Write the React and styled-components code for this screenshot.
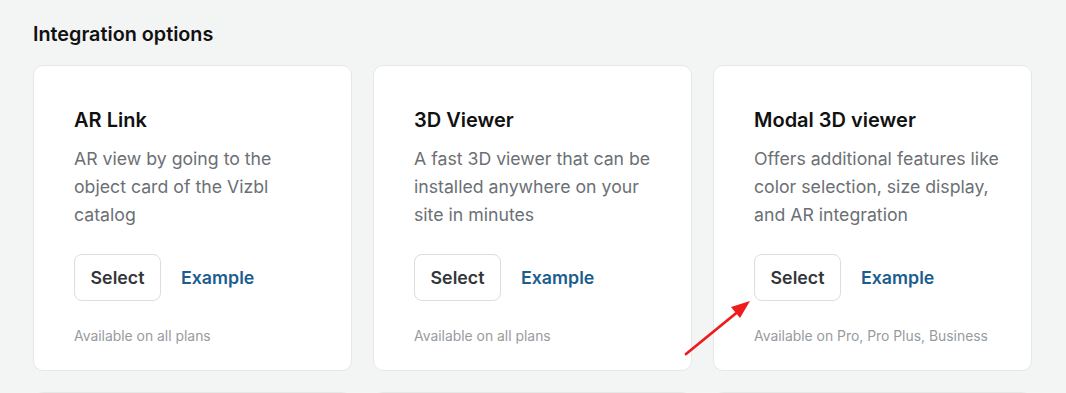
import React from "react";
import styled, { createGlobalStyle } from "styled-components";

const Global = createGlobalStyle`
  html, body { margin: 0; padding: 0; background: #f3f4f4; }
  body { font-family: Inter, "Noto Sans", sans-serif; -webkit-font-smoothing: antialiased; }
  * { box-sizing: border-box; }
`;

const Page = styled.div`
  position: relative;
  padding: 20px 33px 0 33px;
  height: 393px;
  overflow: hidden;
`;

const Heading = styled.h2`
  margin: 0 0 17px 0;
  font-size: 19.8px;
  line-height: 28px;
  font-weight: 600;
  color: #111;
`;

const Grid = styled.div`
  display: grid;
  grid-template-columns: repeat(3, 319px);
  column-gap: 21px;
  row-gap: 21px;
`;

const Card = styled.div`
  background: #fff;
  border: 1px solid #e6e7e7;
  border-radius: 10px;
  padding: 42px 20px 26px 40px;
  height: ${(p) => (p.$short ? "40px" : "306px")};
  display: flex;
  flex-direction: column;
`;

const Title = styled.h3`
  margin: 0 0 13px 0;
  font-size: 20px;
  line-height: 24px;
  font-weight: 600;
  color: #111;
`;

const Desc = styled.p`
  margin: 0;
  font-size: 17.7px;
  line-height: 28px;
  color: #6b7075;
  max-width: 250px;
`;

const Actions = styled.div`
  display: flex;
  align-items: center;
  gap: 20px;
  margin-top: 25px;
`;

const SelectButton = styled.button`
  height: 47px;
  width: 87px;
  border: 1px solid #dcdddf;
  border-radius: 8px;
  background: #fff;
  font-family: inherit;
  font-size: 17.8px;
  font-weight: 600;
  color: #33363a;
  cursor: pointer;
`;

const ExampleLink = styled.a`
  font-size: 17.8px;
  font-weight: 600;
  color: #1b5e8e;
  text-decoration: none;
`;

const Note = styled.div`
  margin-top: 26px;
  font-size: 13.9px;
  line-height: 18px;
  color: #979ba0;
`;

const Arrow = styled.svg`
  position: absolute;
  left: 680px;
  top: 292px;
  pointer-events: none;
`;

const items = [
  {
    title: "AR Link",
    desc: "AR view by going to the object card of the Vizbl catalog",
    note: "Available on all plans",
  },
  {
    title: "3D Viewer",
    desc: "A fast 3D viewer that can be installed anywhere on your site in minutes",
    note: "Available on all plans",
  },
  {
    title: "Modal 3D viewer",
    desc: "Offers additional features like color selection, size display, and AR integration",
    note: "Available on Pro, Pro Plus, Business",
  },
];

export default function App() {
  return (
    <>
      <Global />
      <Page>
        <Heading>Integration options</Heading>
        <Grid>
          {items.map((it) => (
            <Card key={it.title}>
              <Title>{it.title}</Title>
              <Desc>{it.desc}</Desc>
              <Actions>
                <SelectButton>Select</SelectButton>
                <ExampleLink href="#">Example</ExampleLink>
              </Actions>
              <Note>{it.note}</Note>
            </Card>
          ))}
          <Card $short />
          <Card $short />
          <Card $short />
        </Grid>
        <Arrow width="80" height="70" viewBox="0 0 80 70">
          <line x1="6" y1="62" x2="60" y2="18" stroke="#ee1c1c" strokeWidth="2.8" strokeLinecap="round" />
          <polygon points="70,9 51,15 60,26" fill="#ee1c1c" />
        </Arrow>
      </Page>
    </>
  );
}
